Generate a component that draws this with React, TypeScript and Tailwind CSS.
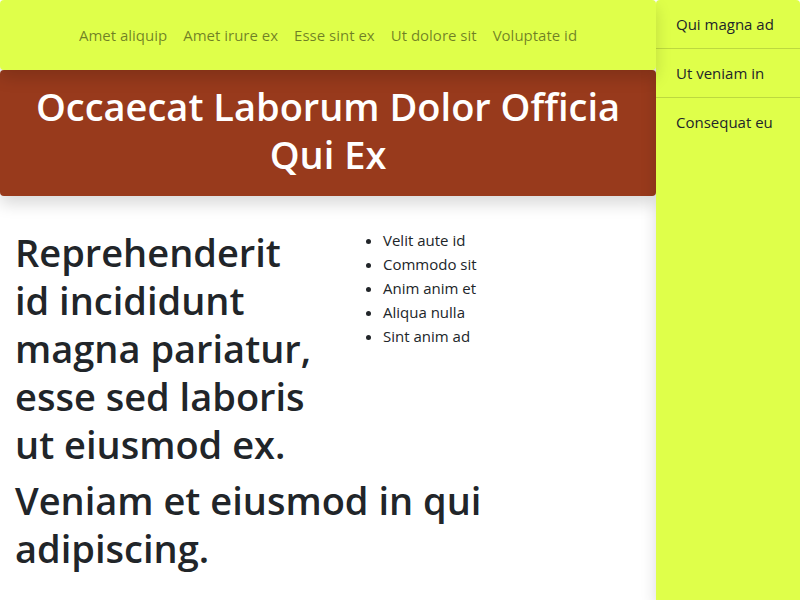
const navItems = ['Amet aliquip', 'Amet irure ex', 'Esse sint ex', 'Ut dolore sit', 'Voluptate id'];
const sideItems = ['Qui magna ad', 'Ut veniam in', 'Consequat eu'];
const points = ['Velit aute id', 'Commodo sit', 'Anim anim et', 'Aliqua nulla', 'Sint anim ad'];

export default function App() {
  return (
    <div className="flex min-h-screen bg-white font-['Open_Sans','Noto_Sans',sans-serif] text-[15px] leading-6 text-[#212529] [font-variant-ligatures:none]">
      <div className="min-w-0 flex-1">
        <nav className="relative z-20 flex h-[70px] items-center justify-center gap-4 rounded bg-[#dfff4a] shadow-[0_8px_16px_rgba(0,0,0,0.15)]">
          {navItems.map((t) => (
            <a key={t} href="#" className="whitespace-nowrap text-black/50">{t}</a>
          ))}
        </nav>
        <header className="rounded bg-[#983a1c] px-4 pt-3 pb-[18px] shadow-[0_8px_16px_rgba(0,0,0,0.15)]">
          <h1 className="text-center text-[38px] leading-[48px] font-semibold text-white">Occaecat Laborum Dolor Officia Qui Ex</h1>
        </header>
        <main className="px-[15px] pt-8">
          <div className="grid grid-cols-2 gap-[30px]">
            <h1 className="text-[38px] leading-[48px] font-semibold">Reprehenderit id incididunt magna pariatur, esse sed laboris ut eiusmod ex.</h1>
            <ul className="list-disc pl-10">
              {points.map((t) => <li key={t}>{t}</li>)}
            </ul>
          </div>
          <h1 className="mt-2 text-[38px] leading-[48px] font-semibold">Veniam et eiusmod in qui adipiscing.</h1>
        </main>
      </div>
      <aside className="relative z-10 w-36 shrink-0 rounded-t bg-[#dfff4a] shadow-[0_8px_16px_rgba(0,0,0,0.15)]">
        <ul>
          {sideItems.map((t) => (
            <li key={t} className="border-b border-black/15 px-5 py-3 whitespace-nowrap last:border-b-0">{t}</li>
          ))}
        </ul>
      </aside>
    </div>
  );
}
